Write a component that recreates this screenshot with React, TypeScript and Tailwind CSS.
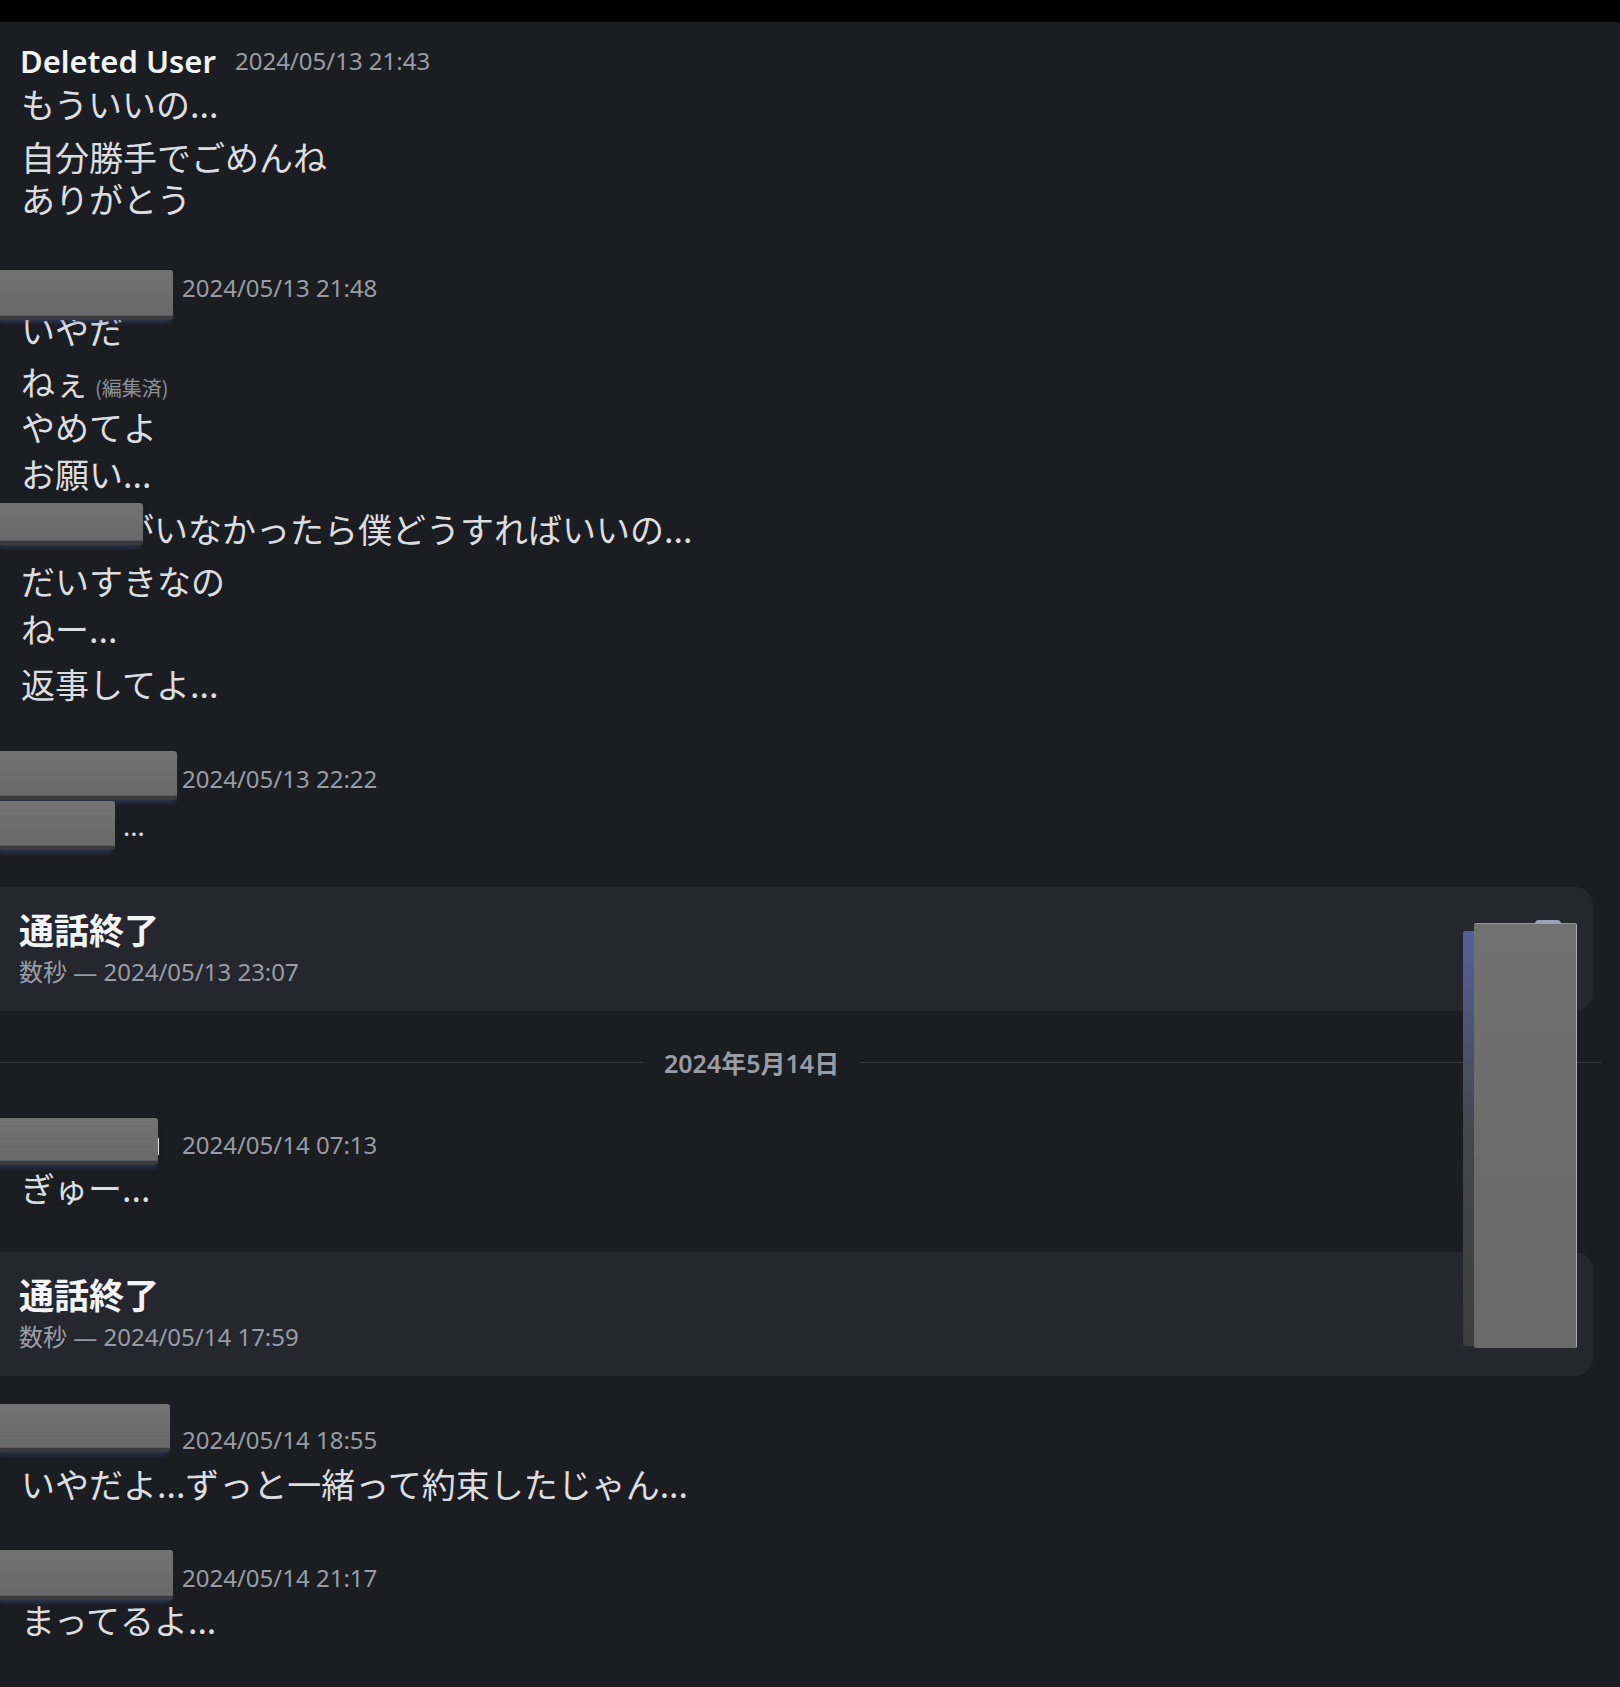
import React from "react";

const JP = "font-['Noto_Sans_CJK_JP',sans-serif]";
const LAT = "font-['Noto_Sans','Noto_Sans_CJK_JP',sans-serif]";

function Sticker({ className }: { className: string }) {
  return (
    <div
      className={
        "absolute left-0 z-10 bg-gradient-to-b from-[#737373] to-[#686868] border-b-[4px] border-b-[#3a3a3d] rounded-r-[3px] shadow-[inset_0_-1px_0_#5a5c66,-2px_3px_4px_rgba(70,90,160,0.35)] " +
        className
      }
    />
  );
}

function Header({ ts, children }: { ts: string; children?: React.ReactNode }) {
  return (
    <div className="relative h-[36px] flex items-center pl-[20px] gap-[19px]">
      {children}
      <span className={`${LAT} text-[24px] text-[#9a9ca5]`}>{ts}</span>
    </div>
  );
}

function Line({ className, children }: { className: string; children: React.ReactNode }) {
  return (
    <div className={`relative h-[42px] leading-[42px] pl-[21px] text-[34px] text-[#dcdde0] whitespace-nowrap ${JP} ${className}`}>
      {children}
    </div>
  );
}

function CallCard({ className, when }: { className: string; when: string }) {
  return (
    <div className={`w-[1593px] h-[124px] bg-[#26262f] rounded-r-[18px] pl-[19px] pt-[22px] ${className}`}>
      <div className={`h-[40px] leading-[40px] text-[35px] font-bold text-[#f2f3f5] ${JP}`}>通話終了</div>
      <div className={`mt-[8px] h-[28px] leading-[28px] text-[24px] text-[#9a9ca5] ${LAT}`}>
        <span className={JP}>数秒</span> — {when}
      </div>
    </div>
  );
}

export default function App() {
  return (
    <div className="relative w-[1620px] h-[1687px] bg-[#1c1d22] overflow-hidden">
      <div className="h-[22px] bg-black" />

      {/* Group 1 */}
      <div className="mt-[21px]">
        <Header ts="2024/05/13 21:43">
          <span className={`${LAT} text-[31px] font-semibold text-[#f2f3f5]`}>Deleted User</span>
        </Header>
      </div>
      <Line className="mt-[4px]">もういいの...</Line>
      <Line className="mt-[11px]">自分勝手でごめんね</Line>
      <Line className="mt-[0px]">ありがとう</Line>

      {/* Group 2 */}
      <div className="mt-[50px]">
        <Header ts="2024/05/13 21:48">
          <span className="w-[143px] h-[30px]" />
          <Sticker className="top-0 w-[173px] h-[50px]" />
        </Header>
      </div>
      <Line className="mt-[3px]">いやだ</Line>
      <Line className="mt-[10px]">
        ねぇ<span className="ml-[6px] text-[20px] text-[#8e9099]">(編集済)</span>
      </Line>
      <Line className="mt-[3px]">やめてよ</Line>
      <Line className="mt-[5px]">お願い...</Line>
      <Line className="mt-[13px]">
        <span className="inline-block w-[99px]" />がいなかったら僕どうすればいいの...
        <Sticker className="top-[-5px] w-[143px] h-[42px]" />
      </Line>
      <Line className="mt-[10px]">だいすきなの</Line>
      <Line className="mt-[6px]">ねー...</Line>
      <Line className="mt-[13px]">返事してよ...</Line>

      {/* Group 3 */}
      <div className="mt-[56px]">
        <Header ts="2024/05/13 22:22">
          <span className="w-[143px] h-[30px]" />
          <Sticker className="top-[-10px] w-[177px] h-[49px]" />
        </Header>
      </div>
      <Line className="mt-[4px]">
        <span className="inline-block w-[102px]" />
        <span className="text-[26px]">...</span>
        <Sticker className="top-0 w-[115px] h-[49px]" />
      </Line>

      <CallCard className="mt-[44px]" when="2024/05/13 23:07" />

      {/* Divider */}
      <div className="mt-[39px] w-[1601px] h-[24px] flex items-center gap-[21px]">
        <div className="w-[643px] h-px bg-[#393a40]" />
        <span className={`${LAT} text-[25px] font-semibold text-[#9a9ca5] leading-[24px]`}>
          2024<span className={JP}>年</span>5<span className={JP}>月</span>14<span className={JP}>日</span>
        </span>
        <div className="flex-1 h-px bg-[#393a40]" />
      </div>

      {/* Group 4 */}
      <div className="mt-[53px]">
        <Header ts="2024/05/14 07:13">
          <span className="w-[143px] h-[30px]" />
          <span className="absolute left-[156px] top-[11px] w-[3px] h-[17px] bg-[#e8e8ea] z-0" />
          <Sticker className="top-[-9px] w-[158px] h-[47px]" />
        </Header>
      </div>
      <Line className="mt-[4px]">ぎゅー...</Line>

      <CallCard className="mt-[43px]" when="2024/05/14 17:59" />

      {/* Group 5 */}
      <div className="mt-[46px]">
        <Header ts="2024/05/14 18:55">
          <span className="w-[143px] h-[30px]" />
          <Sticker className="top-[-18px] w-[170px] h-[48px]" />
        </Header>
      </div>
      <Line className="mt-[5px]">いやだよ...ずっと一緒って約束したじゃん...</Line>

      {/* Group 6 */}
      <div className="mt-[55px]">
        <Header ts="2024/05/14 21:17">
          <span className="w-[143px] h-[30px]" />
          <Sticker className="top-[-10px] w-[173px] h-[50px]" />
        </Header>
      </div>
      <Line className="mt-[3px]">まってるよ...</Line>

      {/* Large redaction sticker overlay */}
      <div className="absolute left-[1463px] top-[923px] w-[114px] h-[425px] z-20">
        <div className="absolute left-0 top-[8px] bottom-[2px] w-[12px] bg-gradient-to-b from-[#55609a] via-[#45464a] to-[#3e3e40] rounded-l-[3px]" />
        <div className="absolute left-[11px] top-0 right-0 bottom-0 bg-gradient-to-b from-[#717171] via-[#6c6c6c] to-[#696969] border-r border-r-[#a9abb3] border-t border-t-[#8d93b3] rounded-[2px]" />
        <div className="absolute left-[72px] top-[-3px] w-[26px] h-[4px] rounded-t-full bg-[#9aa0b8]" />
      </div>
    </div>
  );
}
